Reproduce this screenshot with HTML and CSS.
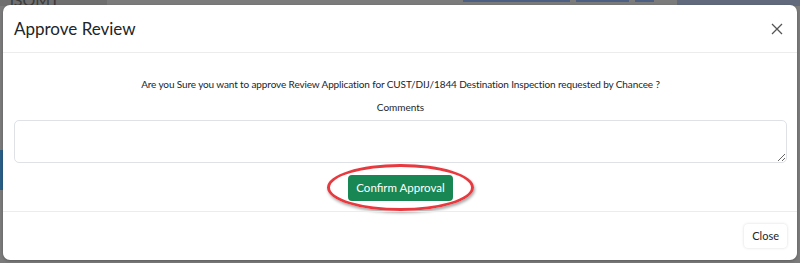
FILE: index.html
```html
<!DOCTYPE html>
<html>
<head>
<title>Approve Review</title>
<link rel="stylesheet" href="styles.css">
</head>
<body>

  <div class="backdrop">
    <div class="page-bar">
      <div class="brand">iSOMT</div>
      <div class="bar-fill"></div>
      <div class="bar-buttons">
        <span class="bar-btn wide"></span>
        <span class="bar-btn mid"></span>
        <span class="bar-btn small"></span>
      </div>
      <div class="bar-gap"></div>
      <div class="bar-user"></div>
    </div>
    <div class="side-mark"></div>
  </div>

  <div class="modal">
    <div class="modal-header">
      <h5 class="modal-title">Approve Review</h5>
      <button class="btn-close" aria-label="Close">
        <svg width="12" height="12" viewBox="0 0 12 12">
          <path d="M1 1 L11 11 M11 1 L1 11" stroke="#555" stroke-width="1.3" fill="none"/>
        </svg>
      </button>
    </div>

    <div class="modal-body">
      <p class="question">Are you Sure you want to approve Review Application for CUST/DIJ/1844 Destination Inspection requested by Chancee ?</p>
      <label class="comments-label" for="comments">Comments</label>
      <textarea id="comments" class="comments"></textarea>
      <div class="confirm-row">
        <div class="highlight">
          <button class="btn-confirm">Confirm Approval</button>
        </div>
      </div>
    </div>

    <div class="modal-footer">
      <button class="btn-light">Close</button>
    </div>
  </div>

</body>
</html>
```

FILE: styles.css
```css
:root {
  --backdrop: #7b7b7b;
  --border: #ececec;
  --text: #212529;
  --green: #198754;
  --ring: #e8393f;
}

body {
  margin: 0;
  width: 800px;
  height: 263px;
  overflow: hidden;
  background-color: var(--backdrop);
  font-family: 'Lato', 'Open Sans', sans-serif;
  color: var(--text);
}

/* page behind the dialog */
.backdrop {
  height: 263px;
  position: relative;
}

.page-bar {
  display: flex;
  height: 6px;
}

.brand {
  width: 107px;
  background-color: #6f6f6f;
  color: #3c3c3c;
  font-size: 16px;
  line-height: 1;
  padding-left: 10px;
  margin-top: -8px;
  height: 14px;
  box-sizing: border-box;
  overflow: hidden;
}

.bar-fill {
  width: 356px;
}

.bar-buttons {
  display: flex;
  gap: 6px;
  height: 2px;
}

.bar-btn {
  background-color: #4d5f82;
}
.bar-btn.wide { width: 107px; }
.bar-btn.mid { width: 53px; }
.bar-btn.small { width: 19px; }

.bar-gap {
  width: 23px;
}

.bar-user {
  flex: 1;
  background-color: #616a7c;
}

.side-mark {
  position: absolute;
  left: 0;
  top: 150px;
  width: 3px;
  height: 40px;
  background-color: #2b5f86;
}

/* dialog */
.modal {
  position: absolute;
  top: 5px;
  left: 3px;
  width: 794px;
  height: 255px;
  background-color: #fff;
  border-radius: 7px;
  box-shadow: 0 1px 3px rgba(0, 0, 0, 0.25);
  display: flex;
  flex-direction: column;
}

.modal-header {
  display: flex;
  align-items: center;
  justify-content: space-between;
  height: 47px;
  padding: 0 10px 0 11px;
  border-bottom: 1px solid var(--border);
}

.modal-title {
  margin: 0;
  font-size: 17px;
  font-weight: 400;
}

.btn-close {
  border: none;
  background: none;
  padding: 4px;
  display: flex;
}

.modal-body {
  display: flex;
  flex-direction: column;
  align-items: center;
  padding: 0 10px 0 11px;
  height: 158px;
}

.question {
  margin: 23px 0 0;
  font-size: 10px;
  letter-spacing: -0.12px;
  line-height: 16px;
}

.comments-label {
  margin-top: 7px;
  font-size: 10px;
  line-height: 16px;
}

.comments {
  margin-top: 5px;
  width: 100%;
  height: 43px;
  box-sizing: border-box;
  border: 1px solid #dee2e6;
  border-radius: 5px;
  resize: vertical;
}

.confirm-row {
  display: flex;
  justify-content: center;
}

.highlight {
  margin-top: 1px;
  padding: 8px 18px 7px 18px;
  border: 3px solid var(--ring);
  border-radius: 50%;
  box-shadow: 1px 2px 3px rgba(0, 0, 0, 0.35);
}

.btn-confirm {
  background-color: var(--green);
  color: #fff;
  border: none;
  border-radius: 4px;
  font-family: inherit;
  font-size: 11.5px;
  padding: 5px 8px;
  line-height: 16px;
}

.modal-footer {
  display: flex;
  justify-content: flex-end;
  align-items: center;
  flex: 1;
  padding: 0 10px;
  border-top: 1px solid var(--border);
}

.btn-light {
  background-color: #fff;
  border: none;
  border-radius: 4px;
  box-shadow: 0 0 3px rgba(0, 0, 0, 0.15);
  font-family: inherit;
  font-size: 11px;
  color: var(--text);
  padding: 4px 8px;
  line-height: 16px;
}
```
